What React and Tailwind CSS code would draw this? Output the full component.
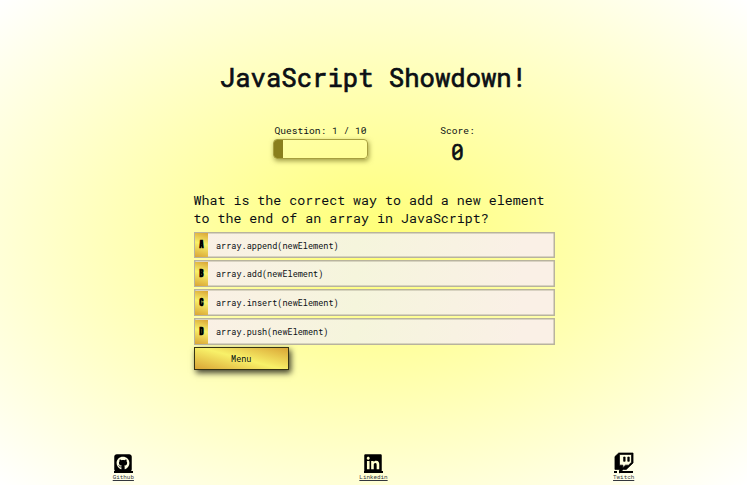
import { FaSquareGithub, FaLinkedin, FaTwitch } from "react-icons/fa6";

const choices = [
  ["A", "array.append(newElement)"],
  ["B", "array.add(newElement)"],
  ["C", "array.insert(newElement)"],
  ["D", "array.push(newElement)"],
];

const links = [
  { name: "Github", Icon: FaSquareGithub, split: false },
  { name: "Linkedin", Icon: FaLinkedin, split: false },
  { name: "Twitch", Icon: FaTwitch, split: true },
];

export default function App() {
  return (
    <div className="flex h-[485px] w-[747px] flex-col overflow-hidden bg-[radial-gradient(ellipse,#ffff75_0%,#ffffff_100%)] font-['Roboto_Mono','DejaVu_Sans_Mono',monospace] text-[#0b0f14]">
      <h1 className="mt-[60px] text-center text-[25.6px] leading-[34px] [-webkit-text-stroke:0.7px_#0b0f14]">
        JavaScript Showdown!
      </h1>
      <div className="mt-[29px] ml-[273px] flex h-[42px]">
        <div className="w-[95px]">
          <p className="text-center text-[9.6px] leading-[16px]">Question: 1 / 10</p>
          <div className="h-[20px] w-[95px] overflow-hidden rounded-[4px] border border-[#a69e3e] shadow-[1px_2px_5px_rgba(80,75,0,0.55)]">
            <div className="h-full w-[9px] bg-[#8a7f1d]" />
          </div>
        </div>
        <div className="ml-[60px] w-[59px] text-center">
          <p className="text-[9.6px] leading-[16px]">Score:</p>
          <p className="text-[21.3px] leading-[27px] [-webkit-text-stroke:0.7px_#0b0f14]">0</p>
        </div>
      </div>
      <main className="mt-[26px] ml-[193.5px] w-[361px]">
        <h2 className="mb-[4.5px] text-[13.3px] leading-[18px] whitespace-nowrap">
          What is the correct way to add a new element
          <br />
          to the end of an array in JavaScript?
        </h2>
        <div className="flex flex-col gap-[2.3px]">
          {choices.map(([letter, text]) => (
            <div
              key={letter}
              className="flex h-[26.7px] items-stretch bg-[linear-gradient(105deg,#faf0e6_0%,#f5f5dc_45%,#faf0e6_90%)] shadow-[inset_0_0_0_1.5px_#b8b39e]"
            >
              <span className="m-[1.5px] mr-0 flex w-[13px] items-center justify-center bg-[linear-gradient(15deg,#daa535_0%,#f8f169_55%,#daa535_100%)] font-['Anton','Roboto',sans-serif] text-[9px] font-black text-black">
                {letter}
              </span>
              <span className="pl-[8px] text-[8.53px] leading-[27px]">{text}</span>
            </div>
          ))}
        </div>
        <button className="mt-[2.2px] block h-[23px] w-[95.5px] border-[1.5px] border-[#373414] bg-[linear-gradient(15deg,#daa535_0%,#f8f169_50%,#daa535_100%)] text-center text-[8.53px] leading-[20px] shadow-[2px_3px_6px_rgba(0,0,0,0.75)]">
          Menu
        </button>
      </main>
      <footer className="mt-auto flex h-[32px] items-start justify-around">
        {links.map(({ name, Icon, split }) => (
          <a key={name} className="flex flex-col items-center text-black">
            <Icon className="h-[20px] w-[20px] overflow-visible" strokeWidth={split ? 18 : 0} />
            <span className="-mt-[2px] flex h-[2px] w-[19px]">
              <span className={split ? "w-[3px] bg-black" : "grow bg-black"} />
              {split && <span className="ml-[2px] grow bg-black" />}
            </span>
            <span className="text-[5.9px] leading-[8px] text-[#33363d] underline">{name}</span>
          </a>
        ))}
      </footer>
    </div>
  );
}
